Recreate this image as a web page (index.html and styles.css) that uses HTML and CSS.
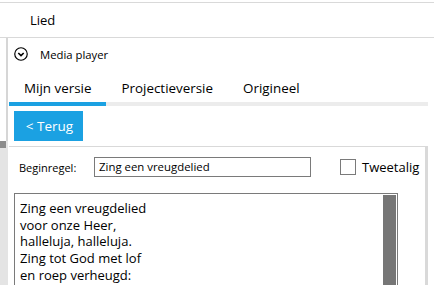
FILE: index.html
```html
<!DOCTYPE html>
<html lang="nl">
<head>
    <meta charset="UTF-8">
    <meta name="viewport" content="width=device-width, initial-scale=1.0">
    <title>Lied</title>
    <link rel="stylesheet" href="styles.css">
</head>
<body>
    <div class="titlebar">Lied</div>

    <div class="main">
        <div class="rail">
            <div class="rail-top"></div>
            <div class="rail-track"><div class="rail-thumb"></div></div>
        </div>

        <div class="content">
            <div class="media">
                <svg class="media-icon" width="13" height="13" viewBox="0 0 13 13">
                    <circle cx="6.5" cy="6.5" r="5.8" fill="none" stroke="#000" stroke-width="1.1"/>
                    <path d="M4 5.6 L6.5 8 L9 5.6" fill="none" stroke="#000" stroke-width="1.5"/>
                </svg>
                <span>Media player</span>
            </div>

            <div class="tabs">
                <div class="tab active">Mijn versie</div>
                <div class="tab">Projectieversie</div>
                <div class="tab">Origineel</div>
            </div>

            <div class="toolbar">
                <button class="back">&lt; Terug</button>
            </div>

            <div class="panel">
                <div class="row">
                    <label class="label">Beginregel:</label>
                    <div class="input">Zing een vreugdelied</div>
                    <div class="check"></div>
                    <span class="check-label">Tweetalig</span>
                </div>

                <div class="textarea">
                    <div class="lines">
                        <div>Zing een vreugdelied</div>
                        <div>voor onze Heer,</div>
                        <div>halleluja, halleluja.</div>
                        <div>Zing tot God met lof</div>
                        <div>en roep verheugd:</div>
                    </div>
                    <div class="scroll"></div>
                </div>
            </div>
        </div>
    </div>
</body>
</html>
```

FILE: styles.css
```css
body {
    margin: 0;
    font-family: "Open Sans", sans-serif;
    color: #000;
    background-color: #fff;
    overflow: hidden;
    height: 285px;
}
.titlebar {
    margin-top: 2px;
    height: 34px;
    border-top: 1px solid #d9d9d9;
    border-bottom: 1px solid #d9d9d9;
    padding-left: 30px;
    font-size: 13px;
    line-height: 34px;
}
.main {
    display: flex;
    height: 247px;
    overflow: hidden;
}
.rail {
    width: 8px;
    flex-shrink: 0;
    display: flex;
    flex-direction: column;
}
.rail-top {
    height: 103px;
    flex-shrink: 0;
    width: 6px;
    border-right: 2px solid #d6d6d6;
}
.rail-track {
    flex: 1;
    background-color: #e4e4e4;
}
.rail-thumb {
    width: 6px;
    height: 7px;
    background-color: #8c8c8c;
}
.content {
    flex: 1;
    display: flex;
    flex-direction: column;
    padding-left: 1px;
    min-height: 0;
}
.media {
    flex-shrink: 0;
    height: 32px;
    display: flex;
    align-items: center;
    padding-left: 5px;
    font-size: 11.3px;
}
.media-icon {
    width: 14px;
    height: 14px;
    margin-right: 12px;
}
.tabs {
    flex-shrink: 0;
    display: flex;
    height: 32px;
    border-bottom: 4px solid #ececec;
    margin-right: 6px;
}
.tab {
    padding: 0 15px;
    font-size: 13.4px;
    line-height: 36px;
    margin-bottom: -4px;
    border-bottom: 4px solid transparent;
}
.tab.active {
    border-bottom-color: #1ba1e2;
}
.toolbar {
    flex-shrink: 0;
    padding: 5px;
}
.back {
    display: block;
    width: 69px;
    height: 30px;
    border: none;
    background-color: #1ba1e2;
    color: #fff;
    font-family: "Open Sans", sans-serif;
    font-size: 13.5px;
    padding: 0 0 0 2px;
}
.panel {
    flex: 1;
    min-height: 0;
    overflow: hidden;
    margin-right: 6px;
    border-top: 1px solid #d9d9d9;
    border-right: 3px solid #d9d9d9;
    padding: 10px 0 0 5px;
}
.row {
    display: flex;
    align-items: center;
    height: 20px;
}
.label {
    font-size: 11px;
    margin-left: 5px;
    width: 75px;
}
.input {
    width: 211px;
    height: 18px;
    border: 1px solid #7a7a7a;
    padding-left: 4px;
    font-size: 11.4px;
    line-height: 18px;
}
.check {
    width: 14px;
    height: 14px;
    border: 1px solid #7a7a7a;
    margin-left: 29px;
}
.check-label {
    font-size: 13px;
    margin-left: 6px;
}
.textarea {
    display: flex;
    margin-top: 16px;
    width: 382px;
    height: 120px;
    border: 1px solid #7a7a7a;
    border-bottom: none;
}
.lines {
    flex: 1;
    padding: 6px 0 0 5px;
    font-size: 13px;
    line-height: 16.7px;
}
.scroll {
    width: 13px;
    margin: 1px 1px 0 0;
    background-color: #767676;
}
```
